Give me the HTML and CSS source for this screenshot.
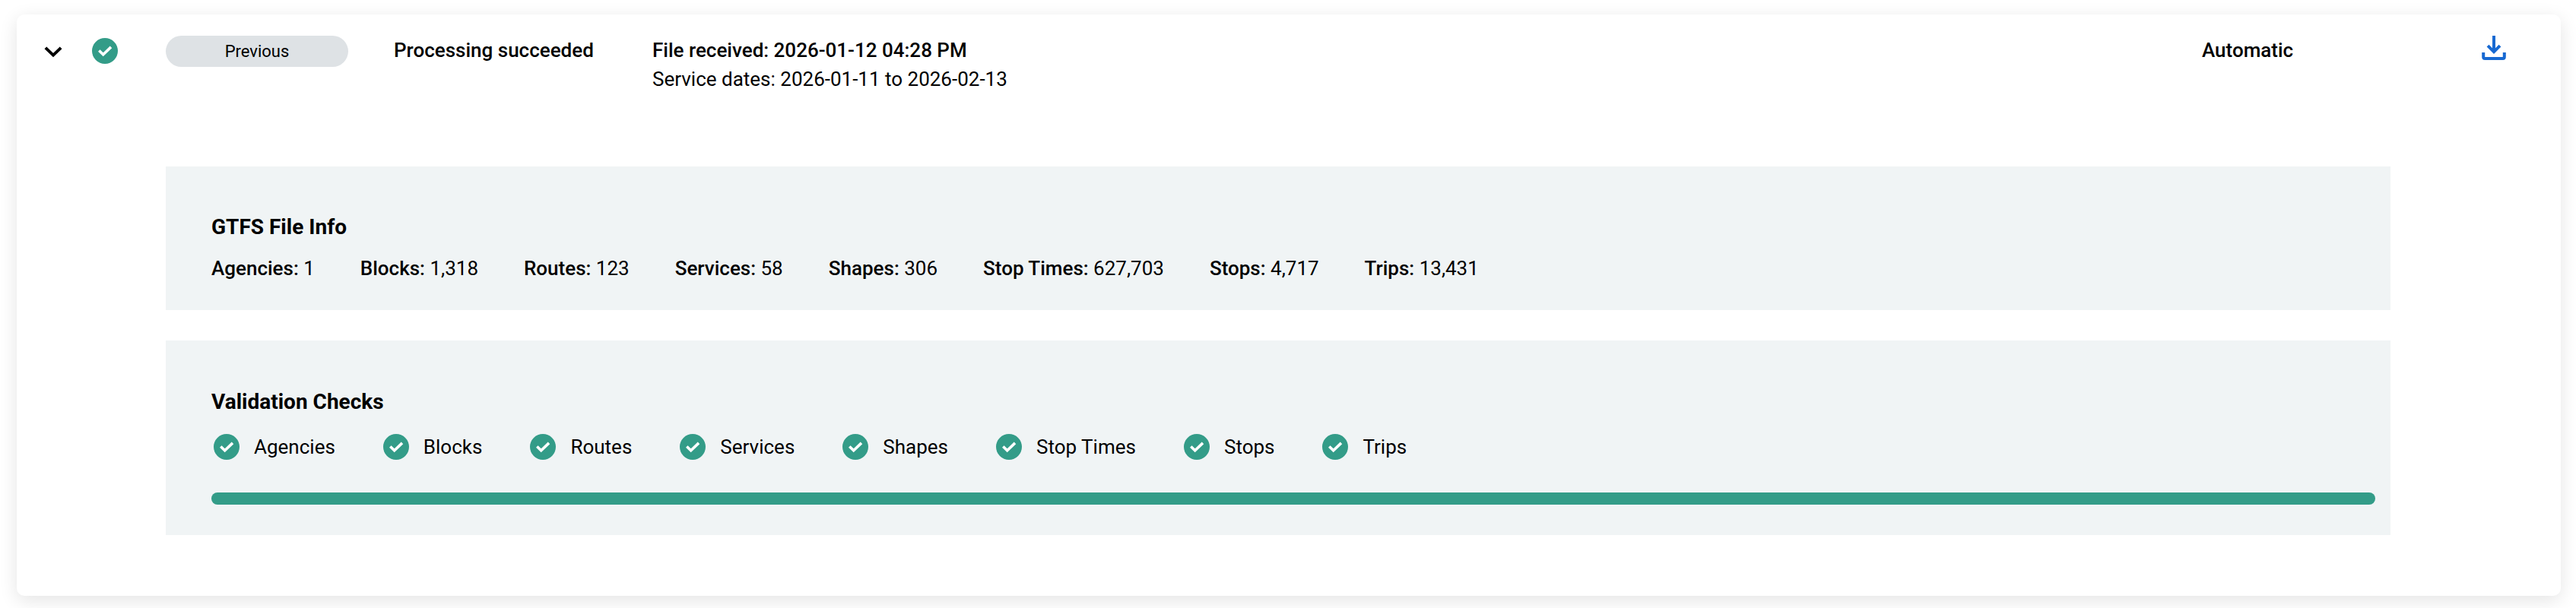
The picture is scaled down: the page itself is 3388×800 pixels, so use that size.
FILE: index.html
```html
<!DOCTYPE html>
<html lang="en">
<head>
<meta charset="UTF-8">
<meta name="viewport" content="width=device-width, initial-scale=1.0">
<title>GTFS Files</title>
<link rel="stylesheet" href="styles.css">
</head>
<body>

<!-- shared icon -->
<svg class="sprite">
  <symbol id="check" viewBox="0 0 40 40">
    <circle cx="20" cy="20" r="17"></circle>
    <path d="M12.3 19.4 L17.7 24.8 L28 14.9"></path>
  </symbol>
</svg>

<div class="card">
  <div class="file-row">
    <svg class="chevron" viewBox="0 0 24 16"><path d="M1.9 1.9 L12 11.6 L22.1 1.9"></path></svg>
    <svg class="check"><use href="#check"></use></svg>
    <span class="badge">Previous</span>
    <span class="status">Processing succeeded</span>
    <div class="dates">
      <div class="received">File received: 2026-01-12 04:28 PM</div>
      <div>Service dates: 2026-01-11 to 2026-02-13</div>
    </div>
    <span class="mode">Automatic</span>
    <a class="download" href="#">
      <svg viewBox="0 0 32 32"><path d="M2.2 22 V28 Q2.2 30 4.2 30 H27.8 Q29.8 30 29.8 28 V22"></path><path d="M16 0 V21"></path><path d="M8 13.2 L16 21.2 L24 13.2"></path></svg>
    </a>
  </div>

  <div class="details">
    <div class="panel info">
      <h3>GTFS File Info</h3>
      <div class="counts">
        <span><b>Agencies:</b> 1</span>
        <span><b>Blocks:</b> 1,318</span>
        <span><b>Routes:</b> 123</span>
        <span><b>Services:</b> 58</span>
        <span><b>Shapes:</b> 306</span>
        <span><b>Stop Times:</b> 627,703</span>
        <span><b>Stops:</b> 4,717</span>
        <span><b>Trips:</b> 13,431</span>
      </div>
    </div>

    <div class="panel validation">
      <h3>Validation Checks</h3>
      <div class="checks">
        <span><svg class="check"><use href="#check"></use></svg>Agencies</span>
        <span><svg class="check"><use href="#check"></use></svg>Blocks</span>
        <span><svg class="check"><use href="#check"></use></svg>Routes</span>
        <span><svg class="check"><use href="#check"></use></svg>Services</span>
        <span><svg class="check"><use href="#check"></use></svg>Shapes</span>
        <span><svg class="check"><use href="#check"></use></svg>Stop Times</span>
        <span><svg class="check"><use href="#check"></use></svg>Stops</span>
        <span><svg class="check"><use href="#check"></use></svg>Trips</span>
      </div>
      <div class="progress"></div>
    </div>
  </div>
</div>

</body>
</html>
```
FILE: styles.css
```css
* {
  box-sizing: border-box;
}
body {
  margin: 0;
  height: 800px;
  overflow: hidden;
  padding: 19px 20px 0 22px;
  background-color: #fff;
  color: #000;
  font-family: Roboto, sans-serif;
  font-size: 26px;
  line-height: 38px;
}
.sprite {
  display: none;
}
.card {
  height: 765px;
  border-radius: 10px;
  background-color: #fff;
  box-shadow: 0 6px 24px rgba(0, 0, 0, 0.11);
}
.file-row {
  display: flex;
  align-items: flex-start;
  height: 200px;
  padding: 28px 72px 0 36px;
}
.chevron {
  width: 24px;
  height: 16px;
  margin: 14px 36px 0 0;
  fill: none;
  stroke: #000;
  stroke-width: 4;
}
.check {
  width: 40px;
  height: 40px;
  flex: none;
  fill: #339c88; /* green disc */
}
#check path {
  fill: none;
  stroke: #fff;
  stroke-width: 3.6;
}
.badge {
  width: 240px;
  height: 41px;
  margin-left: 60px;
  border-radius: 21px;
  background-color: #dee2e5;
  font-size: 22px;
  line-height: 41px;
  text-align: center;
}
.status {
  width: 340px;
  margin-left: 60px;
  font-weight: 500;
}
.received, .mode {
  font-weight: 500;
}
.mode {
  width: 368px;
  margin-left: auto;
}
.download svg {
  display: block;
  width: 32px;
  height: 32px;
  fill: none;
  stroke: #1769d2;
  stroke-width: 4;
}
.details {
  display: flex;
  flex-direction: column;
  gap: 40px;
  margin: 0 224px 0 196px;
}
.panel {
  padding: 60px 20px 0 60px;
  background-color: #f0f4f5;
}
.panel h3 {
  margin: 0;
  font-size: 28px;
  font-weight: 700;
  line-height: 40px;
}
.info {
  height: 189px;
}
.validation {
  height: 256px;
  padding-top: 61px;
}
.counts {
  display: flex;
  gap: 60px;
  margin-top: 15px;
}
.counts b {
  font-weight: 500;
}
.checks {
  display: flex;
  gap: 60px;
  margin-top: 19px;
}
.checks span {
  display: flex;
  align-items: center;
  gap: 16px;
}
.progress {
  height: 16px;
  margin-top: 40px;
  border-radius: 8px;
  background-color: #339c88;
}
```
